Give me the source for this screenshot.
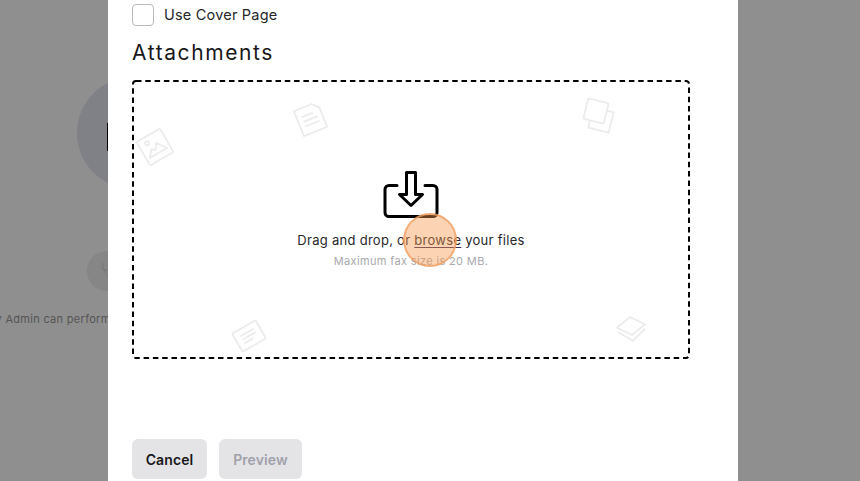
<div class="page">
  <div class="behind">
    <div class="avatar"><span class="initial"></span></div>
    <div class="small-avatar">
      <svg width="16" height="20" viewBox="0 0 16 20" fill="none" stroke="#777" stroke-width="1"><path d="M2 2v7h8M4 9c0 5 4 8 8 7"/></svg>
    </div>
    <p class="note">Only Admin can perform this action</p>
  </div>

  <main class="modal">
    <label class="check"><span class="box"></span><span>Use Cover Page</span></label>
    <h2>Attachments</h2>

    <section class="drop">
      <svg class="dash" width="558" height="279" viewBox="0 0 558 279" fill="none">
        <rect x="1" y="1" width="556" height="277" rx="3" stroke="#000" stroke-width="2" stroke-dasharray="5.5 3.8" />
      </svg>

      <svg class="deco" width="558" height="279" viewBox="0 0 558 279" fill="none" stroke="#ebebeb" stroke-width="1.7" stroke-linejoin="round" stroke-linecap="round">
        <g transform="translate(23 67) rotate(-30)">
          <rect x="-13.500" y="-13.500" width="27" height="27" rx="1" />
          <path d="M-10 7L-4 0L-1 3L3 -3L10 7z" />
          <circle cx="-5" cy="-7" r="2" />
        </g>
        <g transform="translate(178.500 39) rotate(-22)">
          <path d="M-12.500 -13.500h19l6 6v21h-25z" />
          <path d="M-7 -5h11M-7 0h14M-7 5h14" />
        </g>
        <g transform="translate(464 31) rotate(14)">
          <rect x="-10.500" y="-10.500" width="21" height="21" rx="1" />
          <path d="M10.500 -3h7v21h-21v-7.500" />
        </g>
        <g transform="translate(117 256) rotate(-30)">
          <rect x="-13.500" y="-10.500" width="27" height="21" rx="1" />
          <path d="M-7 -4h14M-7 0h14M-7 4h9" />
        </g>
        <g transform="translate(499 246) rotate(-7)">
          <path d="M0 -9L14 0L0 9L-14 0z" />
          <path d="M-13 5L0 15L13 5" />
        </g>
      </svg>

      <svg class="tray" width="58" height="50" viewBox="0 0 58 50" fill="none" stroke="#000" stroke-width="3" stroke-linejoin="round" stroke-linecap="round">
        <path d="M15 15.500H7a4 4 0 0 0-4 4V42.500a4 4 0 0 0 4 4h44a4 4 0 0 0 4-4V19.500a4 4 0 0 0-4-4H43" />
        <path d="M24.500 2.500h9v22h7L29 35.500 17.500 24.500h7z" />
      </svg>
      <p class="lead">Drag and drop, or <u>browse</u> your files</p>
      <p class="hint">Maximum fax size is 20 MB.</p>
    </section>

    <footer>
      <button class="cancel">Cancel</button>
      <button class="preview" disabled>Preview</button>
    </footer>
  </main>

  <div class="cursor"></div>
</div>

<style>
  :global(body) { margin: 0; background: #8f8f8f; }
  * { box-sizing: border-box; }
  .page {
    position: relative;
    width: 860px;
    height: 481px;
    overflow: hidden;
    background: #8f8f8f;
    font-family: Inter, "Liberation Sans", sans-serif;
    color: #18181b;
  }
  .behind { position: absolute; inset: 0; }
  .avatar {
    position: absolute;
    left: 77px;
    top: 77px;
    width: 112px;
    height: 112px;
    border-radius: 50%;
    background: #7f8186;
  }
  .initial {
    position: absolute;
    left: 30px;
    top: 46px;
    width: 4px;
    height: 28px;
    background: #000;
  }
  .small-avatar {
    position: absolute;
    left: 87px;
    top: 251px;
    width: 40px;
    height: 40px;
    border-radius: 50%;
    background: #868686;
    padding: 10px 14px;
  }
  .note {
    position: absolute;
    left: -23px;
    top: 312px;
    margin: 0;
    font-size: 11px;
    line-height: 14px;
    letter-spacing: .3px;
    color: #555;
    white-space: nowrap;
  }
  .modal {
    position: absolute;
    left: 108px;
    top: 0;
    width: 630px;
    height: 481px;
    background: #fff;
    padding: 4px 48px 2px 24px;
    display: flex;
    flex-direction: column;
  }
  .check {
    display: flex;
    align-items: center;
    gap: 10px;
    font-size: 14.500px;
    line-height: 22px;
    letter-spacing: .2px;
    color: #27272a;
  }
  .box {
    width: 22px;
    height: 22px;
    border: 1px solid #b9b9be;
    border-radius: 4px;
  }
  h2 {
    margin: 14px 0 14px;
    font-size: 21px;
    line-height: 26px;
    font-weight: 400;
    letter-spacing: 1.6px;
    color: #18181b;
  }
  .drop {
    position: relative;
    width: 558px;
    height: 279px;
    padding-top: 90px;
    display: flex;
    flex-direction: column;
    align-items: center;
  }
  .dash, .deco { position: absolute; left: 0; top: 0; }
  .tray { display: block; }
  .lead {
    margin: 11px 0 0;
    font-size: 13px;
    line-height: 18px;
    letter-spacing: .28px;
    color: #27272a;
  }
  u { text-underline-offset: 2px; text-decoration-color: #3b2a5a; }
  .hint {
    margin: 5px 0 0;
    font-size: 11px;
    line-height: 14px;
    letter-spacing: .35px;
    color: #a9a9ae;
  }
  footer {
    margin-top: auto;
    display: flex;
    gap: 12px;
  }
  button {
    height: 40px;
    border: 0;
    border-radius: 6px;
    background: #e4e4e7;
    font: 600 14px Inter, "Liberation Sans", sans-serif;
    letter-spacing: .1px;
  }
  .cancel { width: 75px; color: #18181b; }
  .preview { width: 83px; color: #a1a1aa; }
  .cursor {
    position: absolute;
    left: 403px;
    top: 213px;
    width: 54px;
    height: 54px;
    border-radius: 50%;
    background: rgba(248, 150, 75, .42);
    border: 2px solid rgba(240, 160, 100, .75);
  }
</style>
